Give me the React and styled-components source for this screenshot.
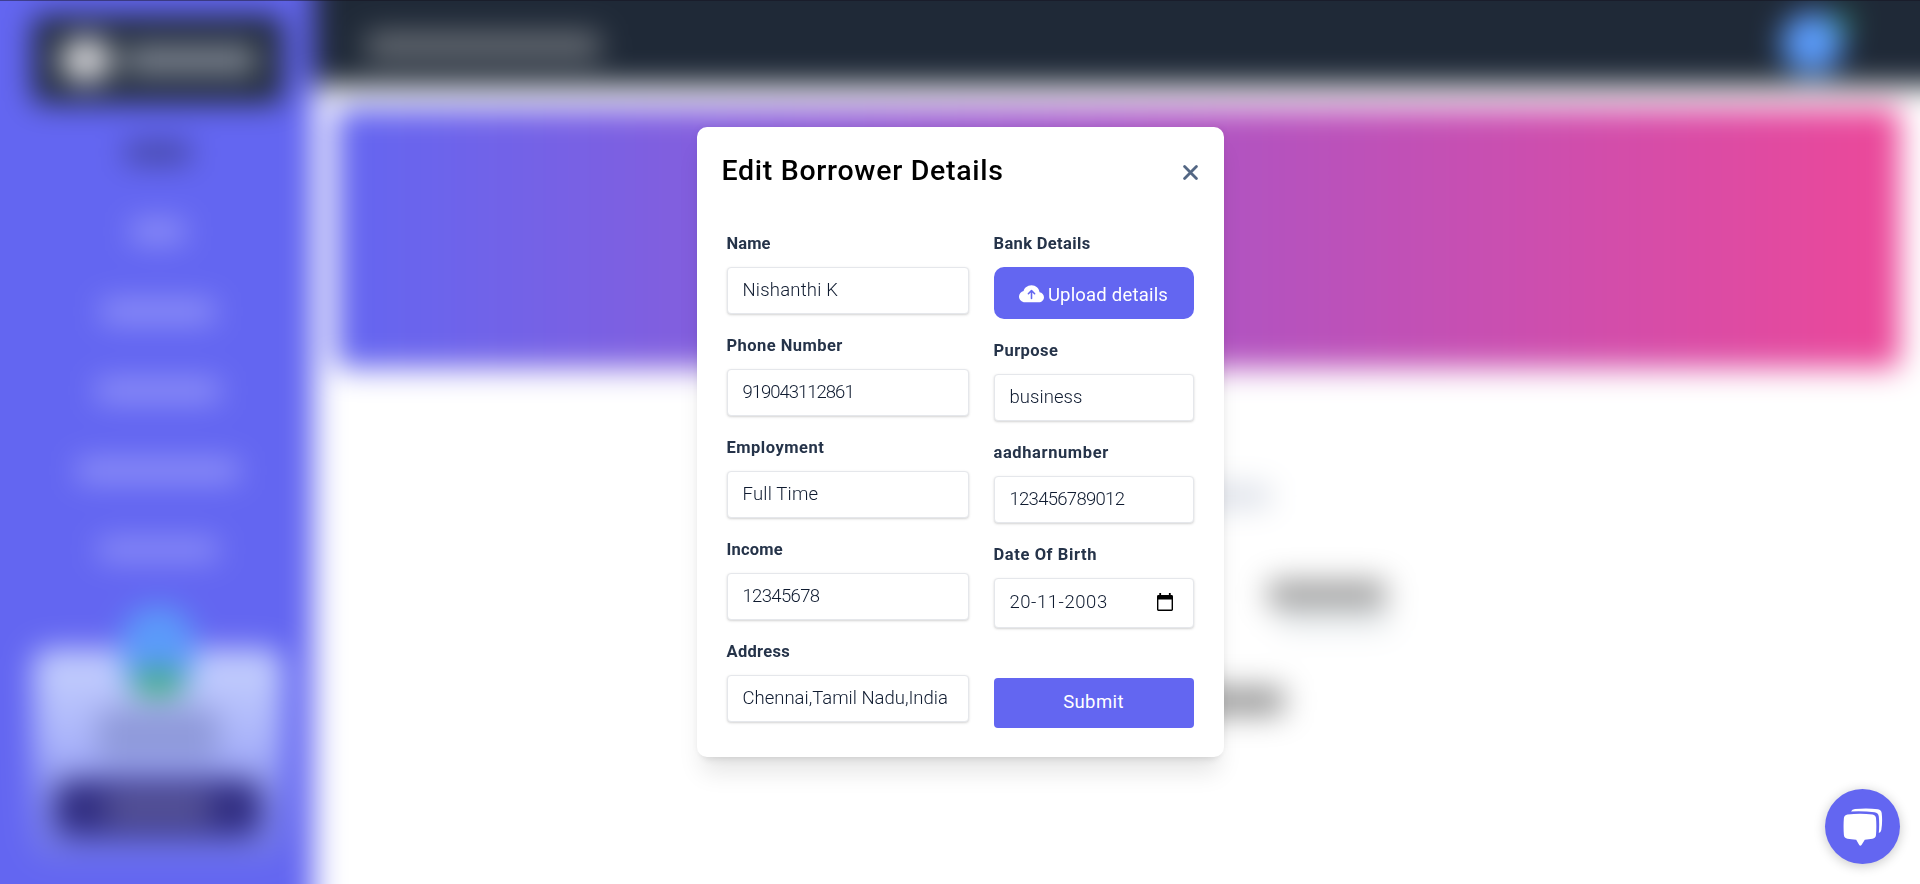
import React from "react";
import styled, { createGlobalStyle } from "styled-components";
import { BsFillCloudArrowUpFill } from "react-icons/bs";

const Global = createGlobalStyle`
  *, *::before, *::after { box-sizing: border-box; }
  html, body { margin: 0; height: 100%; overflow: hidden; }
  body { font-family: Roboto, "Noto Sans", sans-serif; background: #fff; }
  #root { height: 100%; }
`;

const Viewport = styled.div`
  height: 884px;
  overflow: hidden;
`;

/* The blurred page bleeds 48px past every edge so the blur never fades out. */
const Page = styled.div`
  display: flex;
  height: 980px;
  margin: -48px;
  background: #fff;
  filter: blur(15px);
`;

const Sidebar = styled.aside`
  display: flex;
  flex-direction: column;
  align-items: center;
  width: 362px;
  padding: 64px 31px 72px 81px;
  background: #6366f1;
`;

const Logo = styled.div`
  display: flex;
  align-items: center;
  gap: 12px;
  width: 100%;
  height: 88px;
  padding: 0 26px;
  border-radius: 8px;
  background: #1f2937;
`;

const LogoMark = styled.span`
  width: 54px;
  height: 46px;
  border-radius: 50%;
  background: #d4d4d8;
`;

const Bar = styled.span`
  width: ${(p) => p.$w}px;
  height: ${(p) => p.$h}px;
  border-radius: 5px;
  background: ${(p) => p.$c};
`;

const Nav = styled.nav`
  display: flex;
  flex-direction: column;
  align-items: center;
  width: 100%;
  padding-top: 9px;
`;

const NavItem = styled.div`
  display: flex;
  align-items: center;
  justify-content: center;
  height: 79.5px;
`;

const ProfileCard = styled.section`
  display: flex;
  flex-direction: column;
  align-items: center;
  width: 100%;
  height: 212px;
  margin-top: 60px;
  border-radius: 16px;
  background: linear-gradient(#c7d2fe, #aab4fa 45%, #6b70e8);
`;

const ProfileAvatar = styled.div`
  display: flex;
  align-items: flex-end;
  justify-content: center;
  width: 72px;
  height: 90px;
  margin-top: -43px;
  border-radius: 34px;
  background: #5b9bfa;
`;

const AvatarBase = styled.span`
  width: 52px;
  height: 26px;
  border-radius: 12px;
  background: #3fb07c;
`;

const ProfileText = styled.div`
  width: 120px;
  height: 54px;
  margin-top: 12px;
  border-radius: 8px;
  background: #8f9ada;
`;

const ProfileButton = styled.div`
  display: flex;
  align-items: center;
  justify-content: center;
  width: 208px;
  height: 58px;
  margin-top: 17px;
  border-radius: 18px;
  background: #312e81;
`;

const Main = styled.main`
  display: flex;
  flex: 1;
  flex-direction: column;
`;

const TopBar = styled.header`
  display: flex;
  align-items: center;
  justify-content: space-between;
  height: 134px;
  padding: 48px 125px 0 52px;
  background: #1f2937;
`;

const PageHeading = styled.div`
  display: flex;
  padding-top: 6px;
`;

const UserAvatar = styled.div`
  display: flex;
  justify-content: flex-end;
  width: 62px;
  height: 62px;
  border-radius: 50%;
  background: #5b9bfa;
`;

const StatusDot = styled.span`
  width: 18px;
  height: 20px;
  margin-right: -8px;
  border-radius: 50%;
  background: #2f9a72;
`;

const Banner = styled.div`
  height: 260px;
  margin: 22px 68px 0 22px;
  border-radius: 8px;
  background: linear-gradient(to right, #6366f1, #a855c7 50%, #ec4899);
`;

const Summary = styled.div`
  display: flex;
  flex-direction: column;
  padding: 118px 0 0 876px;
`;

const SummaryLine = styled.div`
  display: flex;
  height: ${(p) => p.$h}px;
  padding-left: ${(p) => p.$x || 0}px;
`;

const Overlay = styled.div`
  position: fixed;
  inset: 0;
  display: flex;
  align-items: center;
  justify-content: center;
  box-shadow: inset 0 1px 0 rgba(20, 16, 28, 0.45);
`;

const Modal = styled.div`
  width: 527px;
  height: 630px;
  border-radius: 10px;
  background: #fff;
  box-shadow: 0 20px 25px -5px rgba(0, 0, 0, 0.1), 0 8px 10px -6px rgba(0, 0, 0, 0.1), 0 0 8px rgba(0, 0, 0, 0.05);
`;

const ModalHeader = styled.div`
  display: flex;
  align-items: center;
  justify-content: space-between;
  height: 88px;
  padding: 0 26px 0 25px;
`;

const Title = styled.h1`
  margin: 0;
  color: #000;
  font-size: 28.5px;
  font-weight: 550;
  line-height: 36px;
  letter-spacing: 0.7px;
  white-space: nowrap;
`;

const CloseButton = styled.button`
  display: flex;
  padding: 0;
  margin-top: 3px;
  border: 0;
  background: none;
  color: #536784;
`;

const Form = styled.div`
  display: grid;
  grid-template-columns: 242px 200px;
  gap: 25px;
  padding: 16px 30px 0;
`;

const Column = styled.div`
  display: flex;
  flex-direction: column;
  gap: 19px;
`;

const Field = styled.div`
  display: flex;
  flex-direction: column;
  gap: 12px;
`;

const Label = styled.label`
  padding-top: 2px;
  color: #253349;
  font-size: 16.5px;
  font-weight: 700;
  line-height: 22px;
  letter-spacing: ${(p) => p.$ls || 0}px;
  white-space: nowrap;
`;

const Input = styled.div`
  display: flex;
  align-items: center;
  justify-content: space-between;
  height: 47px;
  padding: 0 20px 2px 15px;
  border: 1px solid #e5e7eb;
  border-radius: 4px;
  background: #fff;
  box-shadow: 0 1px 3px rgba(0, 0, 0, 0.12), 0 1px 2px rgba(0, 0, 0, 0.06);
  color: #0f1b30;
  font-size: 18.5px;
  font-weight: 350;
  white-space: nowrap;
`;

const DateInput = styled(Input)`
  height: 50px;
`;

const Value = styled.span`
  letter-spacing: ${(p) => p.$ls || 0}px;
`;

const UploadButton = styled.button`
  display: flex;
  align-items: center;
  justify-content: center;
  gap: 4px;
  height: 52px;
  padding: 3px 0 0;
  border: 0;
  border-radius: 10px;
  background: #6366f1;
  color: #fff;
  font: 400 18.5px Roboto, sans-serif;
  letter-spacing: 0.2px;
  white-space: nowrap;
`;

const SubmitButton = styled.button`
  height: 50px;
  margin-top: 31px;
  padding: 0 0 2px;
  border: 0;
  border-radius: 4px;
  background: #6366f1;
  color: #fff;
  font: 400 18.5px Roboto, sans-serif;
  letter-spacing: 0.4px;
`;

const ChatButton = styled.button`
  position: fixed;
  right: 20px;
  bottom: 20px;
  display: flex;
  align-items: center;
  justify-content: center;
  width: 75px;
  height: 75px;
  padding: 0;
  border: 0;
  border-radius: 50%;
  background: #6366f1;
  box-shadow: 0 2px 12px rgba(0, 0, 0, 0.22);
`;

const navItems = [
  { w: 66, c: "#42449c" },
  { w: 54, c: "#9496f9" },
  { w: 114, c: "#9496f9" },
  { w: 124, c: "#9496f9" },
  { w: 162, c: "#9496f9" },
  { w: 120, c: "#8f91f8" },
];

const leftFields = [
  { label: "Name", value: "Nishanthi K", ls: 0.2, lls: 0.1 },
  { label: "Phone Number", value: "919043112861", ls: -1, lls: 0.45 },
  { label: "Employment", value: "Full Time", ls: 0.2, lls: 0.5 },
  { label: "Income", value: "12345678", ls: -0.65, lls: 0.2 },
  { label: "Address", value: "Chennai,Tamil Nadu,India", ls: 0, lls: 0.3 },
];

const rightFields = [
  { label: "Purpose", value: "business", ls: 0.05, lls: 0.4 },
  { label: "aadharnumber", value: "123456789012", ls: -0.7, lls: 0.6 },
];

function CloseIcon() {
  return (
    <svg width="15" height="15" viewBox="0 0 15 15" fill="none" stroke="currentColor" strokeWidth="2.8" strokeLinecap="round">
      <path d="M1.6 1.6l11.8 11.8M13.4 1.6L1.6 13.4" />
    </svg>
  );
}

function CalendarIcon() {
  return (
    <svg width="16" height="18" viewBox="0 0 16 18" fill="#000">
      <path d="M2.3 0h1.8v2h7.800V0h1.800v2h.900A1.400 1.400 0 0 1 16 3.400v13.200a1.400 1.400 0 0 1-1.400 1.400H1.400A1.400 1.400 0 0 1 0 16.600V3.400A1.400 1.400 0 0 1 1.400 2h.900zM1.400 6.600v10h13.200v-10z" fillRule="evenodd" />
    </svg>
  );
}

function ChatIcon() {
  return (
    <svg width="40" height="38" viewBox="0 0 40 38" fill="#fff">
      <path d="M4.500 6.500Q17 4.800 29.500 6.500Q32.700 7 33 10Q33.700 18 33 27Q32.700 30.300 29.500 30.800Q26 31.500 21.800 31.700L18.500 37Q17.300 38.300 16.200 37L13.200 31.700Q8 31.500 4.500 30.800Q1.200 30.300 .900 27Q.200 18 .900 10Q1.200 7 4.500 6.500z" />
      <path d="M8 3.500Q9 1.200 12 1Q24 -.3 35 1.200Q38.200 1.800 38.700 5Q39.700 14 38.300 22Q37.800 24.500 35.800 25Q36.600 16 35.800 8.500Q35.300 4.600 31.500 4.200Q20 2.900 8 3.500z" />
    </svg>
  );
}

function TextField({ field }) {
  return (
    <Field>
      <Label $ls={field.lls}>{field.label}</Label>
      <Input>
        <Value $ls={field.ls}>{field.value}</Value>
      </Input>
    </Field>
  );
}

export default function App() {
  return (
    <>
      <Global />
      <Viewport>
        <Page>
          <Sidebar>
            <Logo>
              <LogoMark />
              <Bar $w={132} $h={28} $c="#838a96" />
            </Logo>
            <Nav>
              {navItems.map((item, i) => (
                <NavItem key={i}>
                  <Bar $w={item.w} $h={21} $c={item.c} />
                </NavItem>
              ))}
            </Nav>
            <ProfileCard>
              <ProfileAvatar>
                <AvatarBase />
              </ProfileAvatar>
              <ProfileText />
              <ProfileButton>
                <Bar $w={104} $h={28} $c="#5c599a" />
              </ProfileButton>
            </ProfileCard>
          </Sidebar>
          <Main>
            <TopBar>
              <PageHeading>
                <Bar $w={234} $h={26} $c="#6d7279" />
              </PageHeading>
              <UserAvatar>
                <StatusDot />
              </UserAvatar>
            </TopBar>
            <Banner />
            <Summary>
              <SummaryLine $h={95}>
                <Bar $w={80} $h={20} $c="#d5dae4" />
              </SummaryLine>
              <SummaryLine $h={30} $x={78}>
                <Bar $w={118} $h={26} $c="#999999" />
              </SummaryLine>
              <SummaryLine $h={77} $x={88}>
                <Bar $w={112} $h={18} $c="#e4e9ec" />
              </SummaryLine>
              <SummaryLine $h={30}>
                <Bar $w={94} $h={26} $c="#8e8e8e" />
              </SummaryLine>
            </Summary>
          </Main>
        </Page>
      </Viewport>
      <Overlay>
        <Modal role="dialog">
          <ModalHeader>
            <Title>Edit Borrower Details</Title>
            <CloseButton aria-label="Close">
              <CloseIcon />
            </CloseButton>
          </ModalHeader>
          <Form>
            <Column>
              {leftFields.map((field) => (
                <TextField key={field.label} field={field} />
              ))}
            </Column>
            <Column>
              <Field>
                <Label $ls={0.35}>Bank Details</Label>
                <UploadButton>
                  <BsFillCloudArrowUpFill size={25} />
                  <span>Upload details</span>
                </UploadButton>
              </Field>
              {rightFields.map((field) => (
                <TextField key={field.label} field={field} />
              ))}
              <Field>
                <Label $ls={0.6}>Date Of Birth</Label>
                <DateInput>
                  <Value $ls={0.55}>20-11-2003</Value>
                  <CalendarIcon />
                </DateInput>
              </Field>
              <SubmitButton>Submit</SubmitButton>
            </Column>
          </Form>
        </Modal>
      </Overlay>
      <ChatButton aria-label="Chat">
        <ChatIcon />
      </ChatButton>
    </>
  );
}
